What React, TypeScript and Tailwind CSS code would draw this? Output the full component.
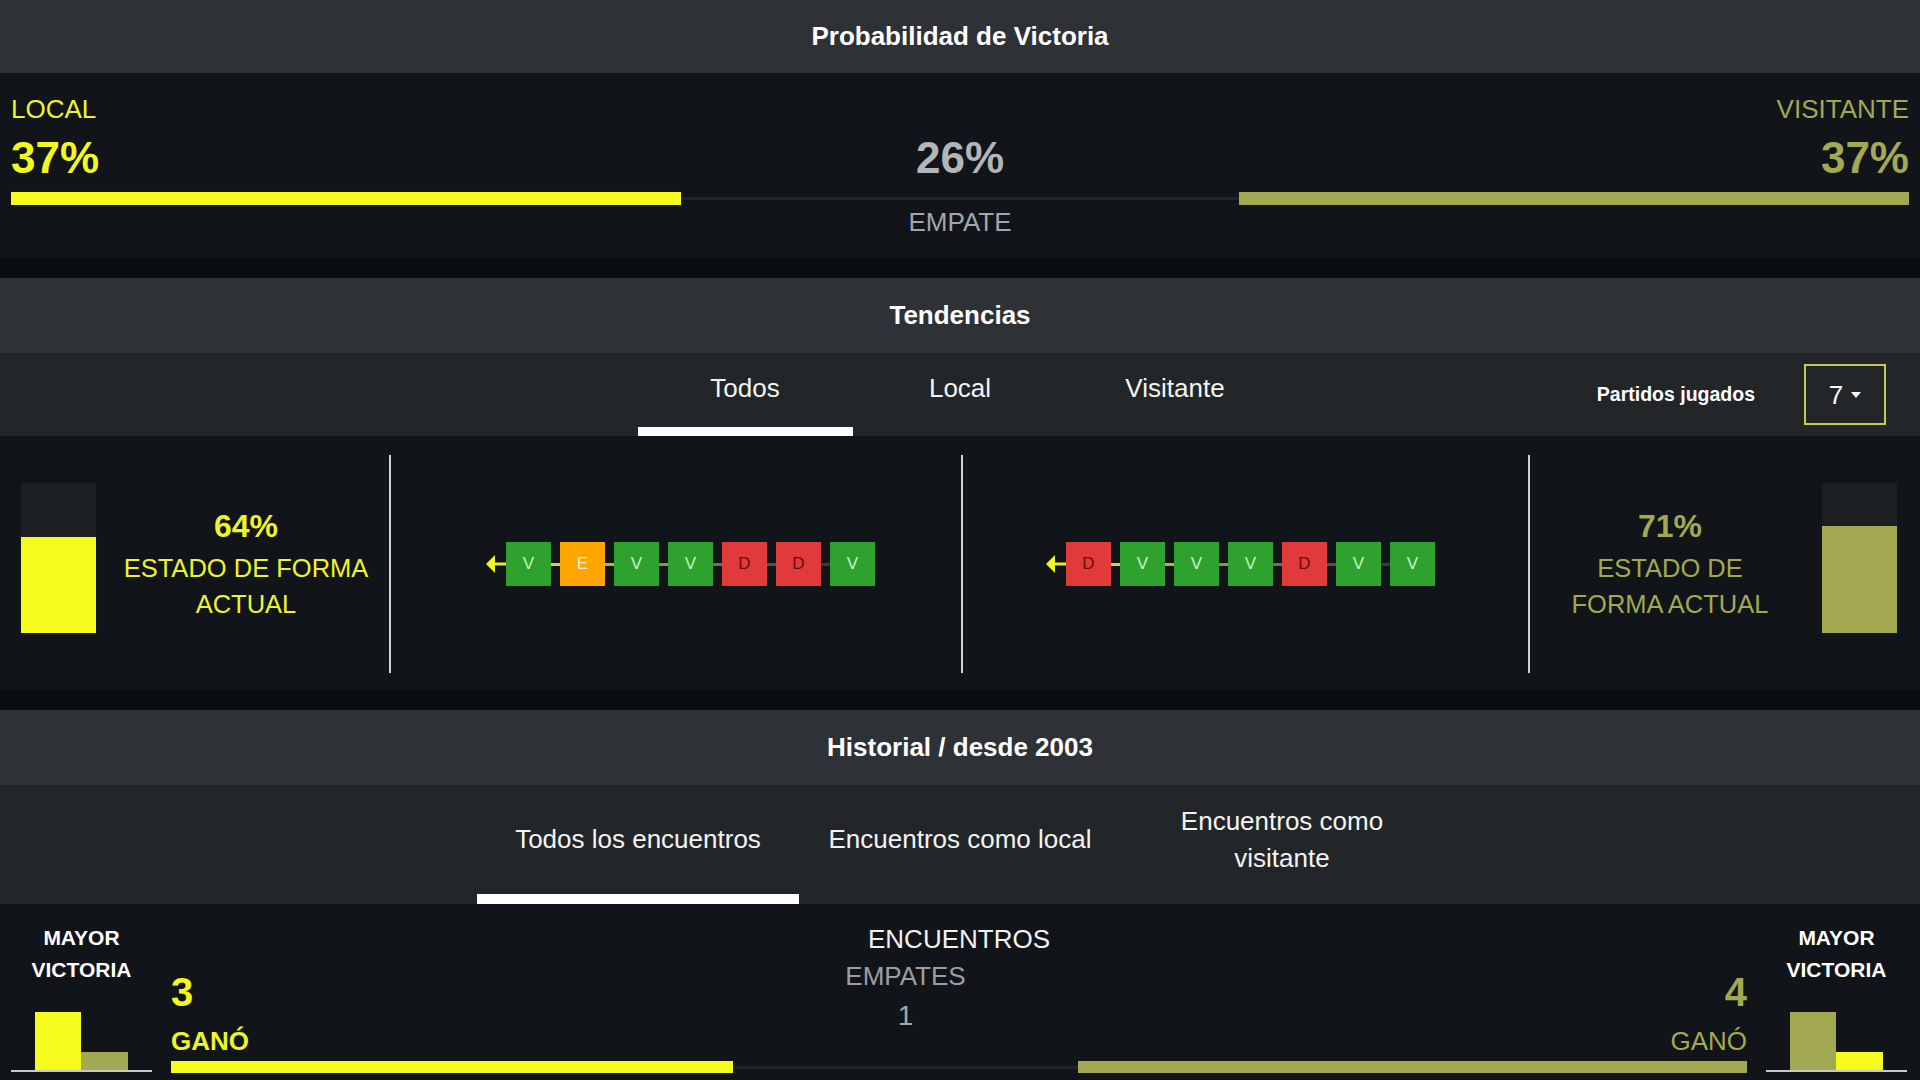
import React from "react";

type R = "V" | "E" | "D";

const boxCls: Record<R, string> = {
  V: "bg-[#2ea12e] text-[#c9f3c1]",
  E: "bg-[#ffa500] text-[#fff1cf]",
  D: "bg-[#e03a3a] text-[#6a0b0b]",
};

const segCls = [
  "bg-[#cdd258]",
  "bg-[#aeb34d]",
  "bg-[#909443]",
  "bg-[#727639]",
  "bg-[#55582f]",
  "bg-[#393c27]",
];

function Arrow() {
  return (
    <svg width="20" height="20" viewBox="0 0 20 20" className="block">
      <path d="M0 10 L9 1 L9 19 Z" fill="#f2f51f" />
      <rect x="8" y="8.5" width="12" height="3" fill="#e6ea3a" />
    </svg>
  );
}

function Form({ results }: { results: R[] }) {
  return (
    <div className="flex items-center">
      <Arrow />
      {results.map((r, i) => (
        <React.Fragment key={i}>
          <div
            className={`w-[45px] h-[44px] flex items-center justify-center text-[17px] ${boxCls[r]}`}
          >
            {r}
          </div>
          {i < results.length - 1 && <div className={`w-[9px] h-[3px] ${segCls[i]}`} />}
        </React.Fragment>
      ))}
    </div>
  );
}

function Caret() {
  return (
    <svg width="10" height="6" viewBox="0 0 10 6" className="block">
      <path d="M0 0 L10 0 L5 6 Z" fill="#ffffff" />
    </svg>
  );
}

export default function App() {
  return (
    <div className="w-[1920px] bg-[#111418] text-white font-['Liberation_Sans',Arial,sans-serif]">
      {/* Probabilidad */}
      <div className="h-[73px] bg-[#2e3236] flex items-center justify-center text-[26px] font-bold">
        Probabilidad de Victoria
      </div>
      <div className="h-[185px] bg-[#111418] px-[11px] pt-[22px]">
        <div className="flex justify-between text-[26px] leading-[28px]">
          <span className="text-[#eef42c]">LOCAL</span>
          <span className="text-[#a3a852]">VISITANTE</span>
        </div>
        <div className="mt-[13px] grid grid-cols-[670px_1fr_670px] text-[44px] leading-[44px] font-bold">
          <span className="text-[#f3f91f]">37%</span>
          <span className="text-center text-[#b3b5b8]">26%</span>
          <span className="text-right text-[#a3a852]">37%</span>
        </div>
        <div className="mt-[12px] flex items-center">
          <div className="h-[13px] w-[670px] bg-[#f5fb1c]" />
          <div className="h-[3px] flex-1 bg-[#202427]" />
          <div className="h-[13px] w-[670px] bg-[#a3a852]" />
        </div>
        <div className="mt-[3px] text-center text-[26px] leading-[28px] text-[#a3a6a9]">EMPATE</div>
      </div>
      <div className="h-[20px] bg-[#0a0d10]" />

      {/* Tendencias */}
      <div className="h-[75px] bg-[#2e3236] flex items-center justify-center text-[26px] font-bold">
        Tendencias
      </div>
      <div className="h-[83px] bg-[#232629] grid grid-cols-[1fr_645px_1fr]">
        <div />
        <div className="flex">
          {["Todos", "Local", "Visitante"].map((t, i) => (
            <div key={t} className="w-[215px] flex flex-col">
              <div className="flex-1 pt-[21px] text-center text-[26px] leading-[28px] text-[#f4f4f4]">{t}</div>
              <div className={i === 0 ? "h-[9px] bg-white" : "h-[9px]"} />
            </div>
          ))}
        </div>
        <div className="flex items-center justify-end pr-[34px] gap-[49px]">
          <span className="text-[19.5px] font-bold text-white">Partidos jugados</span>
          <div className="w-[82px] h-[61px] border-2 border-[#c6cd45] flex items-center justify-center gap-[8px]">
            <span className="text-[26px] leading-[28px]">7</span>
            <Caret />
          </div>
        </div>
      </div>
      <div className="h-[254px] bg-[#111418] pt-[19px] pb-[17px] grid grid-cols-[389px_572px_567px_1fr]">
        <div className="flex pl-[21px]">
          <div className="mt-[28px] w-[75px] h-[150px] bg-[#1c1f22] flex flex-col justify-end">
            <div className="h-[96px] bg-[#f5fb1c]" />
          </div>
          <div className="flex-1 pl-[7px] pt-[53px] text-center text-[#eef42c]">
            <div className="text-[32px] leading-[36px] font-bold">64%</div>
            <div className="mt-[6px] text-[25.5px] leading-[36px]">
              ESTADO DE FORMA
              <br />
              ACTUAL
            </div>
          </div>
        </div>
        <div className="border-l-2 border-[#cfd1d3] flex items-center justify-center pl-[9px]">
          <Form results={["V", "E", "V", "V", "D", "D", "V"]} />
        </div>
        <div className="border-l-2 border-[#cfd1d3] flex items-center justify-center pr-[10px]">
          <Form results={["D", "V", "V", "V", "D", "V", "V"]} />
        </div>
        <div className="border-l-2 border-[#cfd1d3] flex pr-[23px]">
          <div className="flex-1 pr-[12px] pt-[53px] text-center text-[#a3a852]">
            <div className="text-[32px] leading-[36px] font-bold">71%</div>
            <div className="mt-[6px] text-[25.5px] leading-[36px]">
              ESTADO DE
              <br />
              FORMA ACTUAL
            </div>
          </div>
          <div className="mt-[28px] w-[75px] h-[150px] bg-[#1c1f22] flex flex-col justify-end">
            <div className="h-[107px] bg-[#a3a852]" />
          </div>
        </div>
      </div>
      <div className="h-[20px] bg-[#0a0d10]" />

      {/* Historial */}
      <div className="h-[75px] bg-[#2e3236] flex items-center justify-center text-[26px] font-bold">
        Historial / desde 2003
      </div>
      <div className="h-[119px] bg-[#232629] grid grid-cols-[1fr_966px_1fr]">
        <div />
        <div className="flex">
          {[
            ["Todos los encuentros"],
            ["Encuentros como local"],
            ["Encuentros como", "visitante"],
          ].map((lines, i) => (
            <div key={i} className="w-[322px] flex flex-col">
              <div className="flex-1 flex flex-col items-center justify-center text-center text-[26px] leading-[37px] text-[#f4f4f4] whitespace-nowrap">
                {lines.map((l) => (
                  <span key={l}>{l}</span>
                ))}
              </div>
              <div className={i === 0 ? "h-[10px] bg-white" : "h-[10px]"} />
            </div>
          ))}
        </div>
        <div />
      </div>
      <div className="h-[180px] bg-[#111418] flex pl-[11px]">
        {/* left chart */}
        <div className="w-[141px] pt-[18px] flex flex-col">
          <div className="text-center text-[21px] leading-[32px] font-bold text-white">
            MAYOR
            <br />
            VICTORIA
          </div>
          <div className="h-[86px] border-b-2 border-[#c8c8c8] flex items-end justify-center">
            <div className="w-[46px] h-[58px] bg-[#f5fb1c]" />
            <div className="w-[47px] h-[18px] bg-[#a3a852]" />
          </div>
        </div>
        {/* middle */}
        <div className="ml-[19px] w-[1576px] pt-[20px]">
          <div className="text-center text-[26px] leading-[30px] text-[#f2f2f2]">ENCUENTROS</div>
          <div className="mt-[7px] grid grid-cols-[562px_345px_669px]">
            <div className="pt-[11px]">
              <div className="text-[40px] leading-[40px] font-bold text-[#f3f91f]">3</div>
              <div className="mt-[15px] text-[26px] leading-[28px] font-bold text-[#eef42c]">GANÓ</div>
            </div>
            <div className="text-center">
              <div className="text-[26px] leading-[30px] text-[#9c9fa2]">EMPATES</div>
              <div className="mt-[8px] text-[28px] leading-[34px] text-[#a5a8ab]">1</div>
            </div>
            <div className="pt-[11px] text-right">
              <div className="text-[40px] leading-[40px] font-bold text-[#a3a852]">4</div>
              <div className="mt-[15px] text-[26px] leading-[28px] text-[#a3a852]">GANÓ</div>
            </div>
          </div>
          <div className="mt-[6px] flex items-center">
            <div className="h-[12px] w-[562px] bg-[#f5fb1c]" />
            <div className="h-[3px] flex-1 bg-[#202427]" />
            <div className="h-[12px] w-[669px] bg-[#a3a852]" />
          </div>
        </div>
        {/* right chart */}
        <div className="ml-[19px] w-[141px] pt-[18px] flex flex-col">
          <div className="text-center text-[21px] leading-[32px] font-bold text-white">
            MAYOR
            <br />
            VICTORIA
          </div>
          <div className="h-[86px] border-b-2 border-[#c8c8c8] flex items-end justify-center">
            <div className="w-[46px] h-[58px] bg-[#a3a852]" />
            <div className="w-[47px] h-[18px] bg-[#f5fb1c]" />
          </div>
        </div>
      </div>
    </div>
  );
}
